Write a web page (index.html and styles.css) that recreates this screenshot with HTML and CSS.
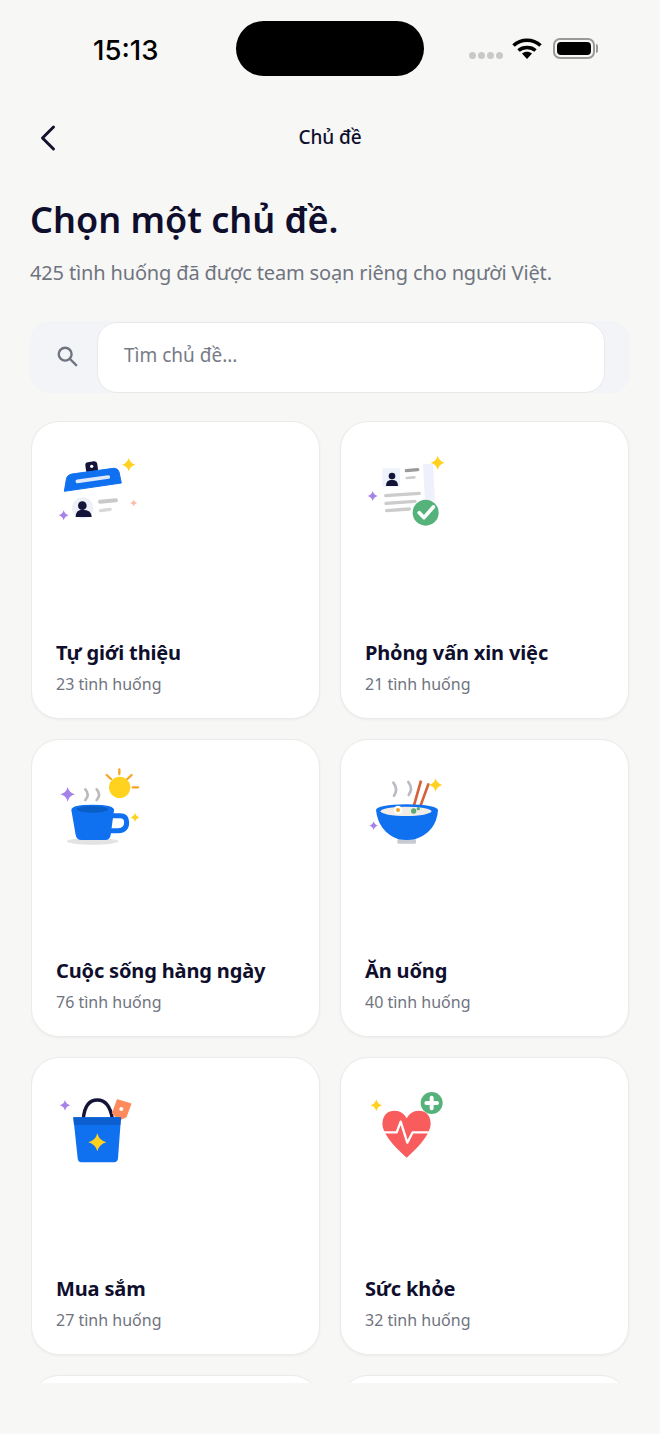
FILE: index.html
```html
<!DOCTYPE html>
<html lang="vi">
<head>
    <meta charset="UTF-8">
    <meta name="viewport" content="width=device-width, initial-scale=1.0">
    <title>Chủ đề</title>
    <link rel="stylesheet" href="styles.css">
</head>
<body>
    <!-- Shared shapes for the topic icons -->
    <svg class="defs" width="0" height="0">
        <defs>
            <path id="spark" d="M0 -1Q.2 -.2 1 0Q.2 .2 0 1Q-.2 .2 -1 0Q-.2 -.2 0 -1Z"/>
        </defs>
    </svg>

    <div class="screen">
        <div class="status-bar">
            <span class="time">15:13</span>
            <div class="island"></div>
            <div class="status-icons">
                <div class="signal"><i></i><i></i><i></i><i></i></div>
                <svg class="wifi" width="30" height="22" viewBox="0 0 30 22">
                    <path d="M1.5 8.5C9 1.5 21 1.5 28.5 8.5" fill="none" stroke="#000" stroke-width="3.6"/>
                    <path d="M6.5 13.5C11 9.5 19 9.5 23.5 13.5" fill="none" stroke="#000" stroke-width="3.6"/>
                    <path d="M10 16.5C13 14 17 14 20 16.5L15 22Z" fill="#000"/>
                </svg>
                <div class="battery"><div class="battery-level"></div></div>
            </div>
        </div>

        <div class="nav">
            <svg class="back" width="18" height="28" viewBox="0 0 18 28">
                <path d="M14.5 3L3.5 14L14.5 25" fill="none" stroke="#12122e" stroke-width="3" stroke-linecap="round" stroke-linejoin="round"/>
            </svg>
            <span class="nav-title">Chủ đề</span>
        </div>

        <h1 class="title">Chọn một chủ đề.</h1>
        <p class="subtitle">425 tình huống đã được team soạn riêng cho người Việt.</p>

        <div class="search">
            <svg class="search-icon" width="22" height="22" viewBox="0 0 24 24">
                <circle cx="10" cy="10" r="7" fill="none" stroke="#6f7480" stroke-width="2.6"/>
                <path d="M15 15L22 22" stroke="#6f7480" stroke-width="2.6" stroke-linecap="round"/>
            </svg>
            <div class="search-input">Tìm chủ đề...</div>
        </div>

        <div class="topics">
            <div class="card">
                <svg class="card-icon" width="96" height="80" viewBox="48 48 288 240">
                    <rect x="137" y="65" width="36" height="34" rx="9" fill="#14143a" transform="rotate(-8 155 82)"/>
                    <circle cx="155" cy="79" r="5" fill="#fff"/>
                    <path d="M73 154L79 118Q81 105 96 102L220 85Q233 84 237 96L244 129Z" fill="#0f70f0" stroke="#0f70f0" stroke-width="3" stroke-linejoin="round"/>
                    <path d="M112 124L205 111" stroke="#dfe9fb" stroke-width="11" stroke-linecap="round"/>
                    <circle cx="128" cy="204" r="32" fill="#eef0f8"/>
                    <circle cx="127" cy="197" r="13" fill="#14143a"/>
                    <path d="M107 231Q107 209 127 209Q155 209 155 231Z" fill="#14143a"/>
                    <path d="M180 185L228 181" stroke="#c9c9c9" stroke-width="12" stroke-linecap="round"/>
                    <path d="M182 212L210 208" stroke="#d8d8d8" stroke-width="10" stroke-linecap="round"/>
                    <use href="#spark" transform="translate(266 74) scale(20)" fill="#ffd21f"/>
                    <use href="#spark" transform="translate(281 189) scale(10)" fill="#ffb9a3"/>
                    <use href="#spark" transform="translate(71 226) scale(15)" fill="#a582e8"/>
                </svg>
                <div class="card-text">
                    <div class="card-title">Tự giới thiệu</div>
                    <div class="card-meta">23 tình huống</div>
                </div>
            </div>

            <div class="card">
                <svg class="card-icon" width="96" height="80" viewBox="45 48 288 240">
                    <rect x="222" y="72" width="30" height="110" fill="#eef0fb" transform="rotate(-3 237 127)"/>
                    <rect x="97" y="85" width="53" height="55" rx="4" fill="#eef2fb"/>
                    <circle cx="126" cy="108" r="10" fill="#14143a"/>
                    <path d="M108 138Q108 119 126 119Q144 119 144 138Z" fill="#14143a"/>
                    <path d="M169 92L203 89" stroke="#9a9a9a" stroke-width="10" stroke-linecap="round"/>
                    <path d="M170 114L193 112" stroke="#ccc" stroke-width="8" stroke-linecap="round"/>
                    <path d="M107 167L208 160" stroke="#ccc" stroke-width="10" stroke-linecap="round"/>
                    <path d="M108 190L195 184" stroke="#ccc" stroke-width="10" stroke-linecap="round"/>
                    <path d="M110 212L178 207" stroke="#ccc" stroke-width="10" stroke-linecap="round"/>
                    <circle cx="227" cy="218" r="39" fill="#55b27a"/>
                    <path d="M208 218L222 233L250 201" fill="none" stroke="#fff" stroke-width="11" stroke-linecap="round" stroke-linejoin="round"/>
                    <use href="#spark" transform="translate(263 68) scale(21)" fill="#ffd21f"/>
                    <use href="#spark" transform="translate(68 168) scale(15)" fill="#a582e8"/>
                </svg>
                <div class="card-text">
                    <div class="card-title">Phỏng vấn xin việc</div>
                    <div class="card-meta">21 tình huống</div>
                </div>
            </div>

            <div class="card">
                <svg class="card-icon" width="96" height="80" viewBox="48 42 288 240">
                    <ellipse cx="158" cy="244" rx="78" ry="10" fill="#e3e3e3"/>
                    <path d="M218 167H240Q260 167 260 187Q260 212 235 212H212" fill="none" stroke="#0f70f0" stroke-width="15"/>
                    <path d="M94 150Q94 134 157 134Q222 134 222 150L212 225Q210 240 195 240H124Q110 240 107 225Z" fill="#0f70f0"/>
                    <ellipse cx="157" cy="148" rx="47" ry="10" fill="#0a5ec5"/>
                    <circle cx="239" cy="82" r="32" fill="#ffd21f"/>
                    <path d="M238 28V42M200 45L213 57M275 45L262 57M278 82H294" stroke="#f5a623" stroke-width="7" stroke-linecap="round"/>
                    <path d="M136 88Q150 103 136 120M170 88Q184 103 170 120" fill="none" stroke="#bbb" stroke-width="8" stroke-linecap="round"/>
                    <use href="#spark" transform="translate(83 103) scale(22)" fill="#a582e8"/>
                    <use href="#spark" transform="translate(285 172) scale(14)" fill="#ffd21f"/>
                </svg>
                <div class="card-text">
                    <div class="card-title">Cuộc sống hàng ngày</div>
                    <div class="card-meta">76 tình huống</div>
                </div>
            </div>

            <div class="card">
                <svg class="card-icon" width="96" height="80" viewBox="45 42 288 240">
                    <path d="M130 68Q146 88 132 107M175 66Q190 86 176 105" fill="none" stroke="#b9bcc6" stroke-width="8" stroke-linecap="round"/>
                    <path d="M192 136L213 62M212 136L236 70" stroke="#d5623a" stroke-width="8"/>
                    <rect x="142" y="238" width="56" height="13" rx="4" fill="#c7cad3"/>
                    <path d="M78 150Q80 135 170 133Q260 135 264 150Q260 215 195 238Q170 242 145 238Q85 215 78 150Z" fill="#0f70f0"/>
                    <ellipse cx="168" cy="154" rx="76" ry="14" fill="#f1ece6"/>
                    <circle cx="144" cy="150" r="13" fill="#fff"/>
                    <circle cx="144" cy="150" r="6" fill="#f5a623"/>
                    <circle cx="191" cy="153" r="8" fill="#5bab73"/>
                    <circle cx="205" cy="146" r="5" fill="#5bab73"/>
                    <use href="#spark" transform="translate(257 75) scale(20)" fill="#ffd21f"/>
                    <use href="#spark" transform="translate(71 197) scale(13)" fill="#a582e8"/>
                </svg>
                <div class="card-text">
                    <div class="card-title">Ăn uống</div>
                    <div class="card-meta">40 tình huống</div>
                </div>
            </div>

            <div class="card">
                <svg class="card-icon" width="96" height="80" viewBox="48 36 288 240">
                    <path d="M130 116Q135 60 172 60Q208 60 217 116" fill="none" stroke="#14143a" stroke-width="10"/>
                    <path d="M232 60L272 72L258 110L238 120L218 100Z" fill="#ff8a5c" stroke="#ff8a5c" stroke-width="4" stroke-linejoin="round"/>
                    <circle cx="244" cy="87" r="6" fill="#fff"/>
                    <path d="M100 112H243L234 235Q233 247 222 247H124Q114 247 113 235Z" fill="#0f70f0"/>
                    <path d="M100 112H243L241 135H102Z" fill="#0d5fd0"/>
                    <use href="#spark" transform="translate(172 187) scale(27)" fill="#ffd21f"/>
                    <use href="#spark" transform="translate(75 76) scale(16)" fill="#a582e8"/>
                </svg>
                <div class="card-text">
                    <div class="card-title">Mua sắm</div>
                    <div class="card-meta">27 tình huống</div>
                </div>
            </div>

            <div class="card">
                <svg class="card-icon" width="96" height="80" viewBox="45 36 288 240">
                    <path d="M170 233Q97 170 97 130Q100 92 135 92Q158 92 170 115Q182 92 205 92Q240 92 242 130Q242 170 170 233Z" fill="#f85c5c"/>
                    <path d="M100 157H140L152 125L172 188L188 157H240" fill="none" stroke="#fff" stroke-width="7" stroke-linejoin="round"/>
                    <circle cx="245" cy="69" r="33" fill="#55b27a"/>
                    <path d="M229 69H261M245 53V85" stroke="#fff" stroke-width="12" stroke-linecap="round"/>
                    <use href="#spark" transform="translate(79 76) scale(18)" fill="#ffd21f"/>
                </svg>
                <div class="card-text">
                    <div class="card-title">Sức khỏe</div>
                    <div class="card-meta">32 tình huống</div>
                </div>
            </div>

            <!-- Next row, cut off by the scroll area -->
            <div class="card"></div>
            <div class="card"></div>
        </div>
    </div>
</body>
</html>
```

FILE: styles.css
```css
body {
    margin: 0;
    overflow: hidden;
    background-color: #f7f7f5;
    font-family: "Noto Sans", sans-serif;
    color: #0f0f2d;
}

.defs {
    display: block;
    height: 0;
}

.screen {
    width: 660px;
    height: 1434px;
    overflow: hidden;
}

.status-bar {
    display: flex;
    align-items: flex-start;
    height: 97px;
    padding: 21px 0 0 93px;
    box-sizing: border-box;
}

.time {
    width: 143px;
    margin-top: 11px;
    font-family: Inter, sans-serif;
    font-size: 27.5px;
    font-weight: 500;
    line-height: 36px;
    color: #000;
}

.island {
    width: 188px;
    height: 55px;
    border-radius: 28px;
    background-color: #000;
}

.status-icons {
    display: flex;
    align-items: center;
    margin: 16px 0 0 45px;
}

.signal {
    display: flex;
    gap: 2px;
    margin: 14px 9px 0 0;
}

.signal i {
    width: 7px;
    height: 7px;
    border-radius: 50%;
    background-color: #c9c9c9;
}

.wifi {
    margin-right: 11px;
}

.battery {
    position: relative;
    box-sizing: border-box;
    width: 42px;
    height: 21px;
    padding: 2px;
    border: 2px solid #9a9a9a;
    border-radius: 7px;
}

/* battery nub */
.battery::after {
    content: "";
    position: absolute;
    top: 4px;
    right: -5px;
    width: 2px;
    height: 9px;
    border-radius: 0 2px 2px 0;
    background-color: #9a9a9a;
}

.battery-level {
    height: 100%;
    border-radius: 4px;
    background-color: #000;
}

.nav {
    position: relative;
    display: flex;
    align-items: center;
    justify-content: center;
    height: 80px;
}

.back {
    position: absolute;
    left: 39px;
    top: 27px;
}

.nav-title {
    font-size: 19px;
    font-weight: 500;
    letter-spacing: -0.1px;
}

.title {
    margin: 18px 0 0 30px;
    font-size: 36px;
    font-weight: 600;
    line-height: 50px;
}

.subtitle {
    margin: 13px 0 0 30px;
    font-size: 20px;
    letter-spacing: -0.15px;
    line-height: 30px;
    color: #6f7480;
}

.search {
    display: flex;
    align-items: center;
    box-sizing: border-box;
    width: 600px;
    height: 72px;
    margin: 33px 0 0 30px;
    padding-right: 25px;
    border-radius: 20px;
    background-color: #f3f4f8;
}

.search-icon {
    flex: none;
    margin: 0 19px 2px 26px;
}

.search-input {
    flex: 1;
    box-sizing: border-box;
    height: 71px;
    padding-left: 26px;
    border: 1px solid #e9e9e9;
    border-radius: 20px;
    background-color: #fff;
    font-size: 19px;
    line-height: 64px;
    color: #777b85;
}

.topics {
    display: grid;
    grid-template-columns: 289px 289px;
    grid-auto-rows: 298px;
    gap: 20px;
    height: 962px;
    margin: 28px 0 0 31px;
    overflow: hidden;
}

.card {
    display: flex;
    flex-direction: column;
    box-sizing: border-box;
    padding: 34px 24px 20px;
    border: 1px solid #ebebeb;
    border-radius: 28px;
    background-color: #fff;
    box-shadow: 0 1px 3px rgba(0, 0, 0, 0.05);
}

.card-icon {
    display: block;
    overflow: visible;
}

.card-text {
    margin-top: auto;
}

.card-title {
    font-size: 20px;
    font-weight: 700;
    letter-spacing: -0.15px;
    line-height: 30px;
}

.card-meta {
    margin-top: 2px;
    font-size: 16px;
    line-height: 28px;
    color: #6f7480;
}
```
